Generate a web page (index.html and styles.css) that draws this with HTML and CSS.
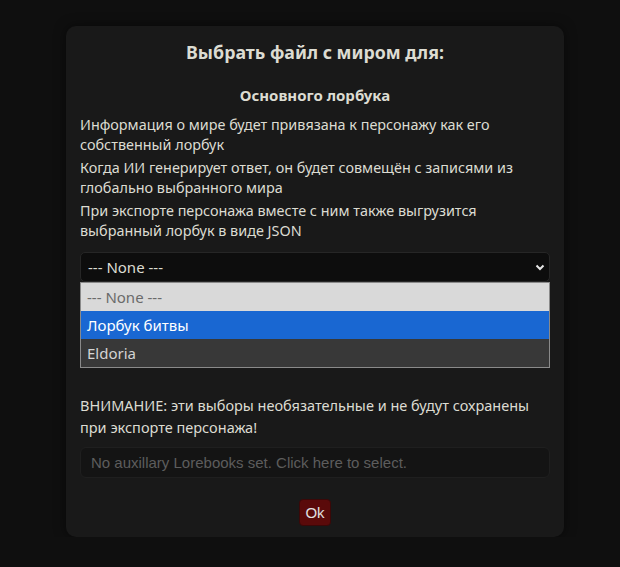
FILE: index.html
```html
<!DOCTYPE html>
<html lang="ru">
<head>
<meta charset="utf-8">
<link rel="stylesheet" href="styles.css">
</head>
<body>
<div class="page">
  <div class="dialog">
    <h3 class="title">Выбрать файл с миром для:</h3>
    <h4 class="subtitle">Основного лорбука</h4>
    <p class="info">Информация о мире будет привязана к персонажу как его собственный лорбук</p>
    <p class="info">Когда ИИ генерирует ответ, он будет совмещён с записями из глобально выбранного мира</p>
    <p class="info">При экспорте персонажа вместе с ним также выгрузится выбранный лорбук в виде JSON</p>
    <div class="select-wrap">
      <div class="select">
        <span>--- None ---</span>
        <svg class="chev" width="10" height="7" viewBox="0 0 10 7"><path d="M1.5 1.5 L5 5 L8.5 1.5" fill="none" stroke="#e6e6e6" stroke-width="2"/></svg>
      </div>
      <div class="listbox">
        <div class="opt opt-none">--- None ---</div>
        <div class="opt opt-sel">Лорбук битвы</div>
        <div class="opt opt-dark">Eldoria</div>
      </div>
    </div>
    <p class="warn">ВНИМАНИЕ: эти выборы необязательные и не будут сохранены при экспорте персонажа!</p>
    <div class="aux">No auxillary Lorebooks set. Click here to select.</div>
    <div class="actions"><button class="ok">Ok</button></div>
  </div>
</div>
</body>
</html>
```
FILE: styles.css
```css
html, body {
  margin: 0;
  padding: 0;
  background: #0f0f0f;
}
body {
  font-family: "Noto Sans", "Open Sans", sans-serif;
  color: #dcdcd2;
}
.page {
  padding-top: 26px;
  display: flex;
  justify-content: center;
}
.dialog {
  width: 470px;
  margin-left: 10px;
  padding: 12px 14px 11px 14px;
  background: #191919;
  border-radius: 10px;
  box-shadow: 0 0 12px rgba(0,0,0,0.5);
}
.title {
  margin: 0;
  text-align: center;
  font-size: 17.8px;
  font-weight: 700;
  line-height: 28px;
}
.subtitle {
  margin: 19px 0 10px;
  text-align: center;
  font-size: 15px;
  font-weight: 700;
  line-height: 20px;
}
.info {
  margin: 0 0 3px;
  font-size: 14.4px;
  line-height: 20px;
}
.select-wrap {
  position: relative;
  margin-top: 11px;
}
.select {
  height: 30px;
  box-sizing: border-box;
  background: #0d0d0d;
  border: 1px solid #262626;
  border-radius: 5px;
  display: flex;
  align-items: center;
  justify-content: space-between;
  padding: 0 4px 0 7px;
  font-size: 15px;
  color: #dcdcd2;
}
.listbox {
  position: absolute;
  left: 0;
  right: 0;
  top: 30px;
  border: 1px solid #8a8a8a;
  background: #383838;
  z-index: 2;
}
.opt {
  height: 28px;
  display: flex;
  align-items: center;
  padding-left: 6px;
  font-size: 15px;
}
.opt-none { background: #d9d9d9; color: #6a6a6a; }
.opt-sel { background: #1967d2; color: #ffffff; }
.opt-dark { background: #383838; color: #d4d4d4; }
.warn {
  margin: 112px 0 9px;
  font-size: 14.5px;
  font-weight: 400;
  line-height: 22px;
}
.aux {
  height: 31px;
  box-sizing: border-box;
  background: #141414;
  border: 1px solid #1f1f1f;
  border-radius: 6px;
  display: flex;
  align-items: center;
  padding-left: 10px;
  font-family: "Liberation Sans", Arial, sans-serif;
  font-size: 15px;
  color: #5d5d5d;
}
.actions {
  display: flex;
  justify-content: center;
  margin-top: 21px;
}
.ok {
  font-family: "Liberation Sans", Arial, sans-serif;
  font-size: 15px;
  color: #e0e0e0;
  background: #5a0a0a;
  border: 1px solid #3a0808;
  border-radius: 4px;
  height: 27px;
  width: 32px;
  padding: 0;
}
```
